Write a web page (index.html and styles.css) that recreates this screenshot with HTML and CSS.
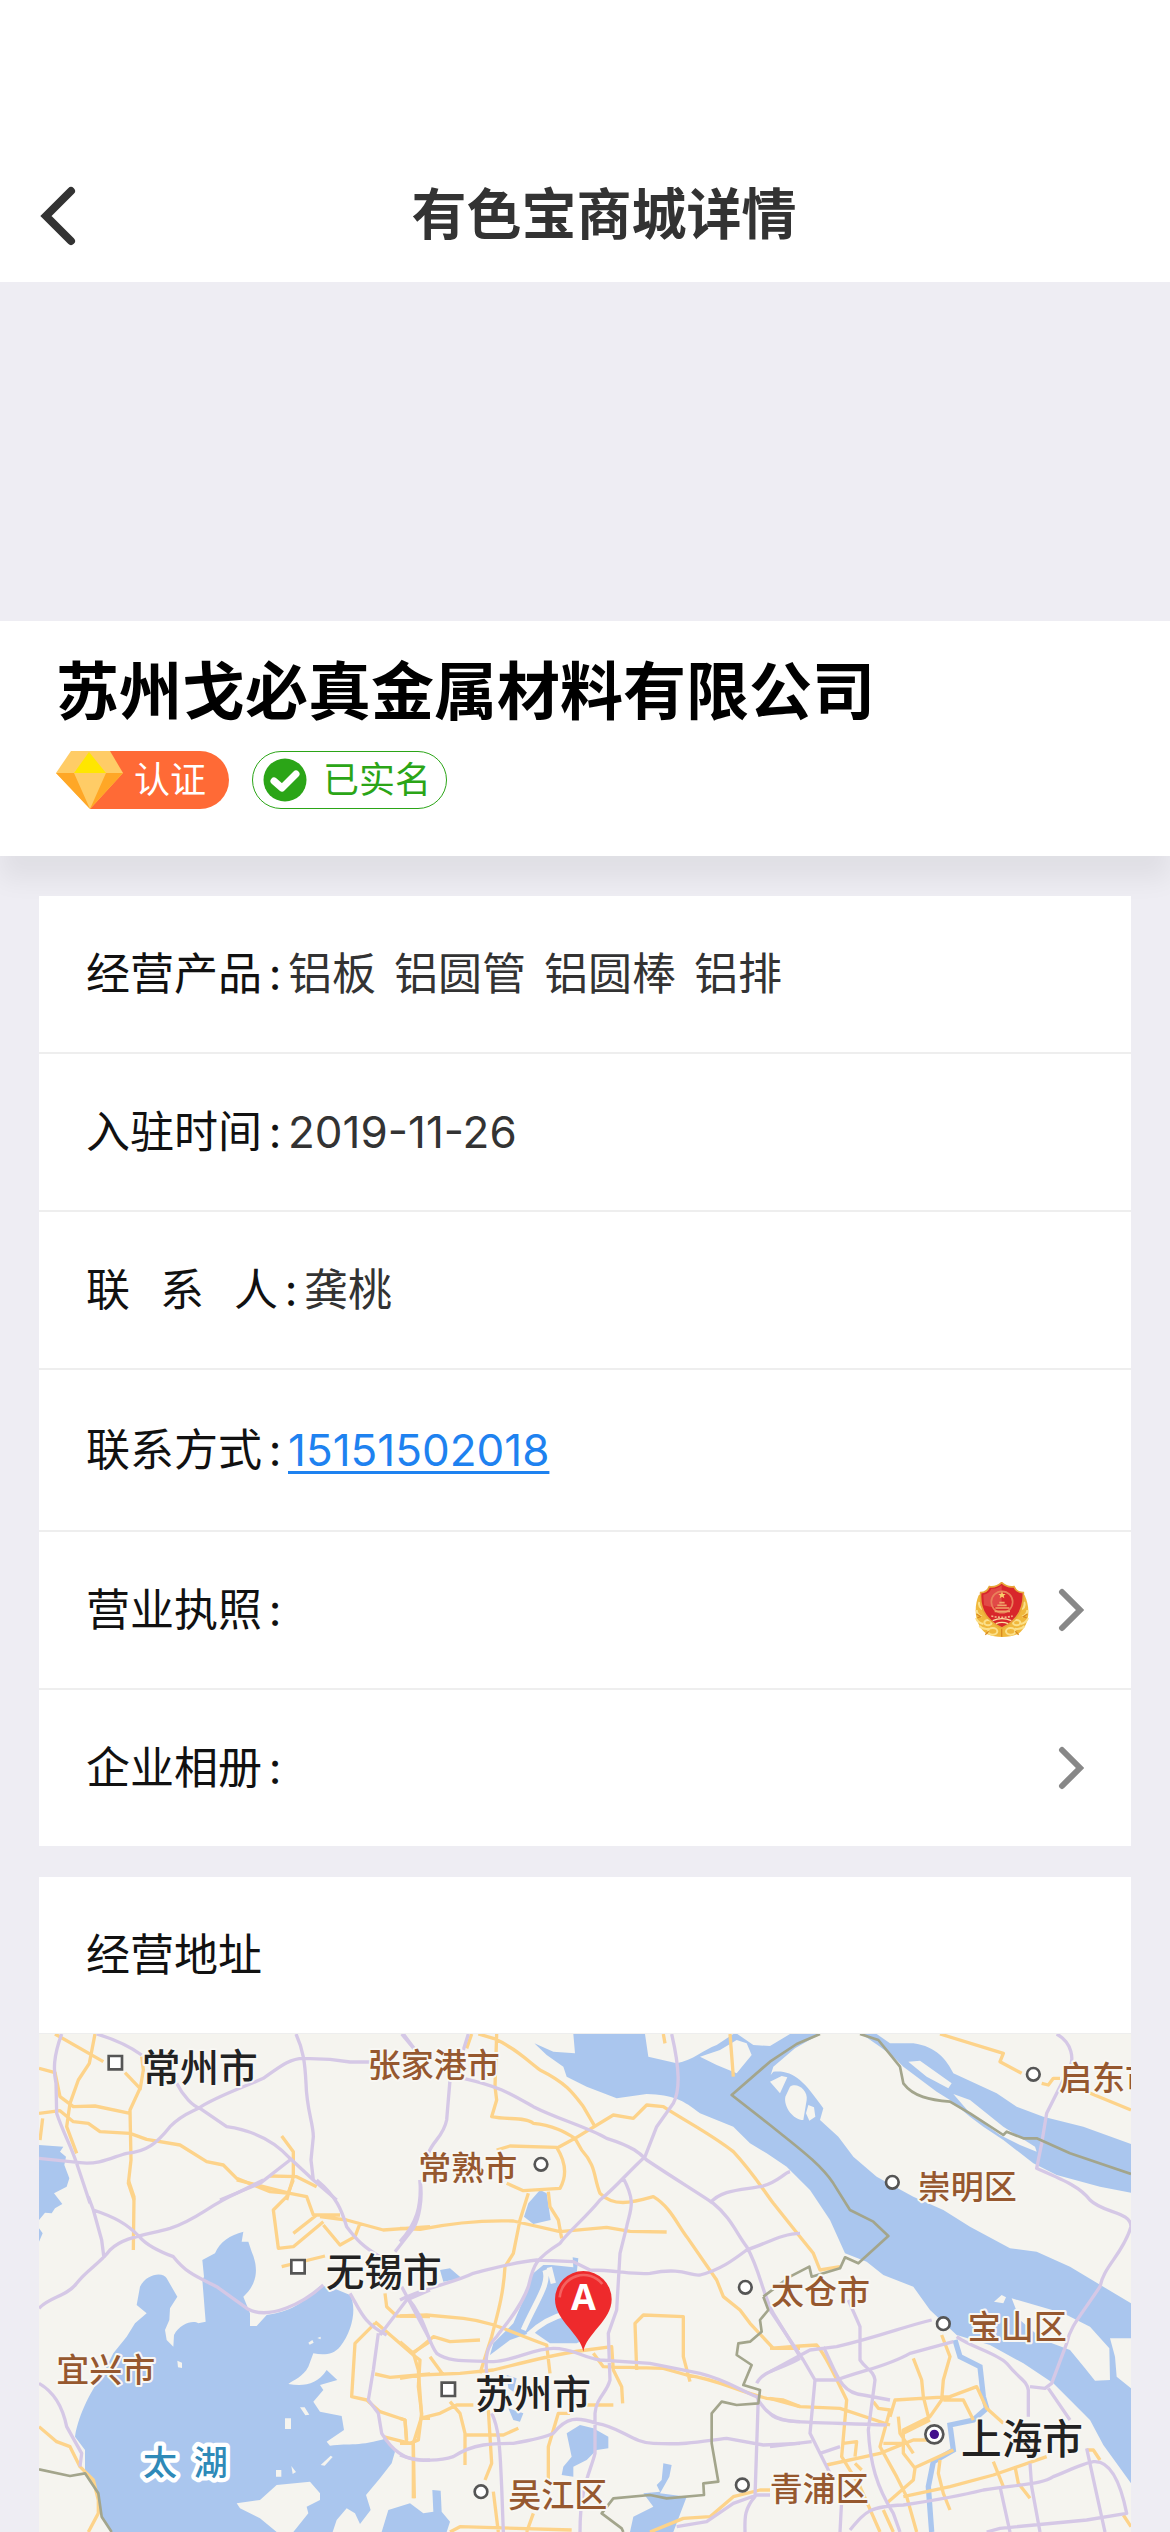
FILE: index.html
```html
<!DOCTYPE html>
<html lang="zh-CN">
<head>
<meta charset="utf-8">
<meta name="viewport" content="width=device-width, initial-scale=1">
<title>有色宝商城详情</title>
<link rel="stylesheet" href="styles.css">
</head>
<body>
<header class="navbar">
  <button class="back" type="button" aria-label="返回">
    <svg width="36" height="60" viewBox="0 0 36 60"><path d="M31 5 6 30 31 55" fill="none" stroke="#333" stroke-width="8" stroke-linecap="round"/></svg>
  </button>
  <h1 class="navbar-title">有色宝商城详情</h1>
</header>

<main>
  <div class="banner"></div>

  <section class="company">
    <h2 class="company-name">苏州戈必真金属材料有限公司</h2>
    <div class="badges">
      <span class="badge badge-cert">
        <svg width="68" height="58" viewBox="0 0 68 58">
          <path d="M15 0H54L67 22 34 58 0 22Z" fill="#fc6"/>
          <path d="M0 22H18L34 58Z M67 22H50L34 58Z" fill="#ffa726"/>
          <path d="M33 1 50 22H18Z" fill="#ffe600"/>
        </svg>
        认证
      </span>
      <span class="badge badge-real">
        <svg width="44" height="44" viewBox="0 0 44 44">
          <circle cx="22" cy="22" r="21.500" fill="#2ba517"/>
          <path d="M11 23 19 30 33 16" fill="none" stroke="#fff" stroke-width="7" stroke-linecap="round" stroke-linejoin="round"/>
        </svg>
        已实名
      </span>
    </div>
  </section>

  <section class="card">
    <dl class="info">
      <div class="row">
        <dt>经营产品<span class="colon">:</span></dt>
        <dd class="products"><span>铝板</span><span>铝圆管</span><span>铝圆棒</span><span>铝排</span></dd>
      </div>
      <div class="row">
        <dt>入驻时间<span class="colon">:</span></dt>
        <dd>2019-11-26</dd>
      </div>
      <div class="row">
        <dt><span class="spread"><span>联</span><span>系</span><span>人</span></span><span class="colon">:</span></dt>
        <dd>龚桃</dd>
      </div>
      <div class="row row-phone">
        <dt>联系方式<span class="colon">:</span></dt>
        <dd><a class="phone" href="tel:15151502018">15151502018</a></dd>
      </div>
      <div class="row">
        <dt>营业执照<span class="colon">:</span></dt>
        <dd class="more">
          <svg width="56" height="56" viewBox="0 0 168 168">
            <path d="M14 40C-2 78 2 130 38 156 66 168 104 168 132 156 168 130 170 78 152 40L126 30H40Z" fill="#f0b83c"/>
            <g fill="none" stroke="#fbe08a" stroke-width="6">
              <path d="M16 60q-4 12 8 22M8 84q0 14 16 20M6 108q4 14 22 18M16 132q12 12 30 8M150 60q6 12-6 22M160 84q0 14-16 20M162 108q-4 14-22 18M152 132q-12 12-30 8"/>
              <ellipse cx="56" cy="148" rx="14" ry="10"/><ellipse cx="110" cy="148" rx="14" ry="10"/>
              <ellipse cx="42" cy="122" rx="11" ry="8"/><ellipse cx="128" cy="122" rx="11" ry="8"/>
            </g>
            <path d="M8 96l12 8-10 4M160 96l-12 8 10 4M34 158l10-10M134 158l-10-10M83 140v24" stroke="#d98a1e" stroke-width="4" fill="none"/>
            <path d="M83 2C96 14 108 16 120 14 124 24 134 32 148 32 150 80 132 116 84 138 36 116 16 80 20 32 34 32 42 24 46 14 58 16 70 14 83 2Z" fill="#d8262b" stroke="#e8a63a" stroke-width="5"/>
            <path d="M28 38C40 36 48 30 52 20 64 22 74 18 83 10V70C60 78 42 74 30 70Z" fill="#e8605a" opacity=".6"/>
            <circle cx="84" cy="60" r="32" fill="none" stroke="#e9805a" stroke-width="5"/>
            <path d="M84 28l3 8h8l-6 5 2 8-7-5-7 5 2-8-6-5h8Z" fill="#f8cf6a"/>
            <path d="M64 78h42M70 70h28M76 62h16M62 88h46" stroke="#f0a56a" stroke-width="5"/>
            <path d="M52 102q32 8 64 0" stroke="#f4b98a" stroke-width="5" stroke-dasharray="6 4" fill="none"/>
            <path d="M56 116q28-12 56 0M66 125q18-8 36 0" stroke="#fbe0a0" stroke-width="4" fill="none"/>
          </svg>
          <svg class="chevron" width="26" height="44" viewBox="0 0 26 44"><path d="M4 4 22 22 4 40" fill="none" stroke="#888" stroke-width="6" stroke-linecap="round"/></svg>
        </dd>
      </div>
      <div class="row">
        <dt>企业相册<span class="colon">:</span></dt>
        <dd class="more">
          <svg class="chevron" width="26" height="44" viewBox="0 0 26 44"><path d="M4 4 22 22 4 40" fill="none" stroke="#888" stroke-width="6" stroke-linecap="round"/></svg>
        </dd>
      </div>
    </dl>
  </section>

  <section class="card">
    <h3 class="card-title">经营地址</h3>
    <svg class="map" viewBox="0 0 3276 1494" role="img" aria-label="地图">
      <!-- Each group holds one sheet of the map: centre, east, north-west, south-west -->
      <g class="water">
        <g transform="translate(-27 438)">
          <path d="M27-105 100-100 90-85 108-70 103-45 118-5 110 20 72 40 97 72 75 85 65 100 45 98 27 120ZM27 145 38 160 27 185Z"/>
          <path d="M245 1056 215 1010 200 940 165 870V810L135 770C145 700 190 620 215 590L250 520 290 470 315 430 350 400 320 375 330 320C350 280 400 275 410 295L442 350 420 385 418 420 405 450 410 480 430 500 432 465C450 430 490 420 505 430L527 425 517 300 522 290 517 240 555 220C570 185 600 165 640 155L635 185 655 185 665 215C685 260 685 310 640 350L660 400V438H680L710 405C780 395 820 370 870 318L900 320 960 345C980 380 970 450 930 500 910 525 880 525 850 520L835 560C820 590 790 600 775 612 820 620 860 615 890 570L922 600 870 615 880 630 850 665 870 695 935 708 942 750 890 785 900 797C960 790 990 800 1070 775L1095 815 1085 850 1050 895 1008 945 1022 990 990 1032 975 1000 950 985 920 1020 908 1056Z"/>
          <path class="land" d="M620 970 690 960 740 915 840 905 870 940V960L830 980 835 1000 790 1056H740L690 1015 630 985ZM765 715h18v32h-18ZM810 682l14 0 14 22-12 2ZM872 855l30-28 6 4-24 26ZM738 870h16v20h-16ZM784 858l14 18-10 6ZM442 542l14 6v16l-12-2ZM835 488l12-8 4 8-12 6ZM862 474l10-4v8Z"/>
        </g>
        <g transform="translate(1083 -42)">
          <path d="M-55 1536-35 1470 30 1450 70 1480 100 1475 97 1410 122 1412 125 1475 150 1505 140 1536Z"/>
          <path d="M420 510 440 520 452 600 400 612 372 590 385 550ZM120 750 150 745 185 775 130 785Z"/>
          <path d="M430 735 455 735 520 742 518 712 535 715 530 760 560 850 570 950 530 970 450 970 400 935 330 960 270 1005 280 970 340 910 370 840 400 760Z"/>
          <path d="M540 1215 580 1225 625 1250V1285L590 1290 560 1320 520 1340V1370L485 1365 490 1340 515 1310 500 1240ZM790 1330 815 1335 808 1370 780 1420 860 1430 820 1536H690L700 1490 760 1460 730 1420 780 1415 770 1395 785 1380ZM320 1065l30 10-10 40-15-10ZM325 1165l45 15-10 25-20-5Z"/>
          <path d="M435 750C450 790 410 840 370 930M385 945C420 910 460 890 500 880M448 742 460 790" fill="none" stroke="#f5f4ef" stroke-width="16"/>
          <path d="M403 70 460 95 525 100 520 42H735L745 110 830 130C880 120 910 90 950 75L1000 42 1012 42 1060 75 1110 78 1170 42H1260L1185 85 1120 140 1112 165 1120 155C1180 150 1210 180 1270 265L1260 300 1315 350 1360 410 1430 470 1540 530 1630 570 1710 620 1830 685 1910 695 2010 740 2110 800 2193 850V1390L2110 1275 2070 1200 1960 1090 1870 1030 1770 975 1670 945 1590 870 1540 800 1450 765 1400 725 1335 700 1290 600 1230 510 1160 440 1100 400 1050 370 1000 320 950 300 900 280C850 240 820 225 740 222L650 235 560 200 500 170 490 140 440 105Z"/>
          <path class="land" d="M900 110 960 90 1010 60 1040 70 1055 105 1010 160 950 135Z"/>
        </g>
        <g transform="translate(2193 -42)">
          <path d="M275 42H320L360 70H430C500 80 530 120 550 160L680 220 740 260 820 290 940 320 1083 372V518L990 500 860 465 790 430 700 360 640 320 600 290 540 240 500 215 400 140 370 110 330 80Z"/>
          <path class="land" d="M415 125 450 122 545 190 535 205 470 170ZM550 222 600 240 700 320 795 380 800 395 750 375 690 345 600 280ZM0 185 35 168 52 172 30 220ZM672 845 695 825 708 832 700 850ZM725 835 880 880 960 920 1018 985 1020 1080 975 1082 945 1045 900 990 820 960 750 900ZM1083 955H1020L1035 1010 1040 1070 1083 1105Z"/>
          <path class="land" d="M60 200C80 185 115 210 110 240L100 300C70 300 40 260 46 230ZM115 255 132 262 136 290 118 302 108 280Z"/>
          <path d="M555 960 570 1010 630 1040 640 1130 650 1165 610 1200 540 1215 550 1290 490 1325 475 1400 485 1536" fill="none" stroke="#aac6ee" stroke-width="16"/>
        </g>
      </g>

      <g class="minor">
        <path transform="translate(-27 -552)" d="M75 552 220 635M195 552 178 640 145 690 120 760 110 830 140 910M27 655 75 668 90 740 130 770 195 768 300 790M27 790 90 782 130 815 175 820 210 845 300 850 350 868 450 885 530 935 580 945 620 985 720 1025 780 1030M285 668 330 715 300 780 303 930 295 1000 312 1050M335 620 340 660 330 720M38 805 30 870M755 858 790 905V980L770 1050M720 978 800 980 860 1010"/>
        <path transform="translate(-27 438)" d="M295 0 312 50 310 210M620 0 780 40 830 50 850 105H930M790 0 770 50 730 90 745 205 790 200 880 125M790 160 860 105M880 135 930 195 975 170 990 130M870 110 950 120 1060 150 1200 140M755 260 885 228M1065 340 1070 380 1100 408 1200 410M1035 425 1150 525 1170 540 1165 620 1175 700 1165 780 1140 790 1060 770M1035 430 975 490 965 650 1010 660 1050 695 1125 720 1130 780M1035 582 1080 592 1200 582M1150 790 1153 955M1145 520 1200 485M1175 715H1200M27 740 80 785 120 800 150 860 190 900 205 960V1000L175 1056"/>
        <path transform="translate(1083 -42)" d="M215 42 200 85M235 42 280 55C340 80 380 120 420 150 500 190 520 220 550 260L585 320M290 42 285 200 290 240 275 290C320 300 380 290 400 310 460 315 500 340 525 355L545 390C590 440 580 470 600 520 640 560 690 550 760 530 810 560 830 610 860 650L950 780 970 830 1020 870 1050 910 1120 985H1200M470 385 525 355 640 285 700 295 740 255 790 260C850 300 930 340 1000 395 1060 460 1090 510 1120 550L1200 650 1240 700 1260 750 1320 740M290 390 330 378 470 382C500 430 500 470 480 505L370 512 320 490M385 520 360 600 340 700 315 740C310 830 290 890 275 950L240 1060M445 515 450 560 475 600 485 655M0 625 60 628C150 610 250 600 340 603L480 635 620 622 690 634 800 636M0 888 80 885 190 895C280 905 340 940 440 975L450 1060M0 965 40 1000 100 950 150 965 240 960M40 1000 55 1050 65 1190 40 1270V1435M90 1010 130 1065M0 1075 60 1065 180 1060 280 1050C400 1020 480 1000 560 990L635 980 640 1050 665 1100 668 1150M580 1000 610 1040 790 1045 860 1065C960 1080 1000 1110 1100 1135L1150 1140 1200 1160M710 1050 705 910 730 885 850 890V1010L870 1085M60 1195 120 1180 170 1155 220 1155M150 1145 180 1180 195 1240V1335M195 1245H310L355 1225M265 1170 275 1330 255 1380M510 1180H475L445 1280V1380M0 1270H40M560 1155H640M0 1195 15 1200 20 1270M280 1415 295 1536M150 1536 180 1520 515 1530M790 42 795 70M990 42 1000 170M750 1536 850 1495 930 1490 1000 1430 1080 1410H1110M380 1536 400 1480"/>
        <path transform="translate(2193 -42)" d="M510 42 700 100 690 125 755 160M815 190 835 195 850 175H870M950 215 1083 270M0 985 90 978 140 975C170 1010 190 1060 230 1140L215 1310 270 1400 330 1536M430 1015 455 1080 460 1130 475 1190M515 945 540 1010 520 1080 515 1140 480 1190 400 1230V1300L435 1345 430 1380 350 1450M0 1135 90 1160 210 1165 360 1215M310 1145 325 1165 360 1170 330 1280 380 1370 410 1430 440 1536M360 1190 375 1140 540 1130 620 1100 650 1165 700 1210M520 1140H580L610 1200M170 1335 330 1300 430 1260 480 1260M400 1430 540 1400 670 1365 830 1310M340 1270H400M430 1345 550 1290M510 1320 505 1360 520 1420 540 1470M670 1325 700 1400M735 1340 745 1390 780 1435M950 1290H970L990 1320M385 1190 390 1240 430 1300M340 1470 370 1536M1060 1485 1083 1520M220 1270 260 1265 255 1310M400 1240 480 1200M255 1330 275 1350"/>
      </g>

      <g class="major">
        <path transform="translate(-27 -552)" d="M95 552C70 620 70 660 78 700L80 790C100 850 120 880 140 940L180 1060M200 552C260 570 300 590 335 615M440 700C460 740 490 770 510 775L590 830C660 840 730 870 780 925L850 990 920 1050M27 925 150 938C210 945 250 920 290 910 350 905 380 880 420 830 460 790 490 785 510 772 560 740 620 720 700 685 750 650 780 625 820 625L900 628 960 636H1020M798 552C820 600 825 640 828 700 830 780 850 820 850 860L843 930 850 990M780 930 690 1000 570 1050M1120 552 1160 605"/>
        <path transform="translate(-27 438)" d="M175 50 190 90 215 180 222 235M190 90C250 110 290 130 330 172 350 195 390 215 430 230 470 280 500 290 560 320L655 388C720 420 820 370 880 315M27 385C60 350 110 350 140 310 170 270 210 250 240 210 280 170 350 165 420 145 500 120 530 80 620 40L700 0M860 0C920 50 935 90 950 140 980 180 1000 200 1050 230M1170 0C1180 60 1165 120 1150 145L1095 215M960 340C990 390 1000 430 1070 465M1050 465 1130 360 1200 330M1115 320 1200 480M1045 460 1030 570 1015 660 1045 700 1055 760C1080 800 1120 850 1200 840M27 610C80 640 100 690 110 740L155 820 150 860"/>
        <path transform="translate(1083 -42)" d="M5 42 45 90M205 42 190 90M150 180 140 300C130 350 100 360 85 400M60 480C65 560 50 610 0 665M190 175C300 200 330 220 400 260 480 300 560 320 620 355 700 380 720 400 740 420 830 480 880 510 940 550 990 590 1010 640 1040 680 1080 750 1090 830 1120 880L1200 1010M815 42C840 150 840 210 820 250L770 320 735 410C680 460 650 500 600 540 560 590 500 640 480 670 400 720 400 740 385 800 360 870 310 920 290 950 260 980 255 1010 260 1060M670 475C710 550 690 570 680 620L660 700 650 870 625 940 630 1080C620 1120 590 1130 585 1180V1300C570 1360 540 1400 540 1536M930 550C960 510 1020 510 1080 500 1130 490 1150 460 1170 455M0 840C80 800 160 790 220 760 300 740 350 725 410 720L520 725 570 750C650 750 700 765 750 760 850 740 870 770 900 765 960 750 1000 720 1040 690 1100 670 1150 640 1200 640M20 830C80 900 80 960 110 1000 150 1030 220 1020 280 1025 350 1020 400 985 460 985 520 985 540 1010 600 1020L750 1030 900 1060C980 1080 1020 1110 1070 1130 1090 1170 1120 1205 1200 1205M0 1305C60 1330 130 1320 160 1310 220 1270 280 1270 340 1270 400 1260 440 1250 460 1240 500 1190 530 1190 590 1210 660 1220 700 1270 760 1270 860 1275 900 1265 980 1255L1090 1275 1200 1270M275 1180C300 1230 300 1300 305 1400L310 1536M1075 1130 1065 1430C1030 1470 1035 1500 1035 1536M1070 1090C1090 1050 1140 1050 1200 1015M830 1520 920 1505 1000 1450 1070 1425H1110"/>
        <path transform="translate(2193 -42)" d="M860 42C910 70 910 120 900 140L830 280 815 370 800 445C880 480 930 500 960 540 1000 580 1083 575 1083 620 1060 700 1000 740 990 800 930 890 900 920 890 970L845 1090 825 1105 780 1100M560 950C600 980 680 1000 710 1030 750 1080 770 1080 775 1110V1190M835 1105 900 1200M0 870 100 1020 135 1080 120 1240 190 1380M235 840 270 920V1020C290 1050 310 1050 315 1080L295 1230C300 1330 320 1400 370 1480L390 1536M485 900C400 920 330 950 200 980L120 990 0 1055M550 965 420 1000C350 1040 280 1050 200 1080H135M160 980C200 1060 210 1120 280 1125L360 1140M0 1180C20 1210 80 1205 350 1215M0 1280 125 1265M150 1300 210 1280M240 1530C290 1470 300 1460 400 1455 500 1440 560 1430 640 1410 780 1390 820 1390 850 1370 900 1350 940 1330 970 1325 1020 1320 1050 1380 1070 1480L950 1500 690 1525 650 1536M780 1330 785 1400 810 1536M950 1285 975 1400 1005 1536M690 1400 720 1536M215 1440 210 1536"/>
      </g>

      <g class="border-line">
        <path transform="translate(-27 438)" d="M27 868 120 888 165 880 205 940 215 1010 245 1056"/>
        <path transform="translate(2193 -42)" d="M150 42 80 72 0 125-115 225 0 315C80 380 150 430 190 490L240 570 310 605 355 648 265 730 225 712 210 745 125 770 118 740 60 770-20 830M270 42 325 60 390 140 400 190C430 230 480 240 540 245L600 280 700 345 710 335 760 355H800L900 400 1083 462"/>
        <path transform="translate(1083 -42)" d="M1090 830 1105 870 1080 900 1085 935 1050 965 1015 970 1010 1005 1055 1035 1030 1095 1080 1110 1075 1150 1010 1155 965 1145 935 1180V1270L955 1385 910 1390 912 1425 800 1435 750 1425 640 1435 605 1480 665 1525 670 1536"/>
      </g>

      <g class="marks">
        <path d="M209 66h40v40h-40ZM757 678h40v40h-40ZM1208 1046h40v40h-40Z"/>
        <circle cx="1506" cy="391" r="19"/><circle cx="2119" cy="760" r="19"/>
        <circle cx="1326" cy="1373" r="19"/><circle cx="2110" cy="1353" r="19"/>
        <circle cx="2983" cy="121" r="19"/><circle cx="2560" cy="445" r="19"/>
        <circle cx="2713" cy="869" r="19"/><circle cx="2686" cy="1201" r="27"/>
      </g>
      <circle cx="2686" cy="1201" r="14" fill="#43108c"/>

      <g class="city">
        <text x="308" y="143">常州市</text>
        <text x="860" y="756">无锡市</text>
        <text x="1308" y="1121">苏州市</text>
        <text class="metro" x="2766" y="1261">上海市</text>
      </g>
      <g class="town">
        <text x="986" y="128">张家港市</text>
        <text x="1138" y="438">常熟市</text>
        <text x="52" y="1043">宜兴市</text>
        <text x="1408" y="1420">吴江区</text>
        <text x="2196" y="811">太仓市</text>
        <text x="2192" y="1402">青浦区</text>
        <text x="2786" y="915">宝山区</text>
        <text x="2636" y="496">崇明区</text>
        <text x="3060" y="168">启东市</text>
      </g>
      <text class="lake" x="312" y="1323">太</text>
      <text class="lake" x="464" y="1323">湖</text>

      <path d="M1633 953C1625 900 1548 860 1548 796A85 85 0 0 1 1718 796C1718 860 1641 900 1633 953Z" fill="#ee2a2c"/>
      <path d="M1562 790A72 72 0 0 1 1690 750" fill="none" stroke="#f4625f" stroke-width="8"/>
      <text class="pin" x="1633" y="828">A</text>
    </svg>
  </section>
</main>
</body>
</html>
```
FILE: styles.css
```css
* {
  box-sizing: border-box;
  margin: 0;
  padding: 0;
}

body {
  background: #eeedf3;
  color: #111;
  font-family: Inter, "Noto Sans CJK SC", sans-serif;
  font-size: 44px;
  line-height: 60px;
}

.navbar {
  display: grid;
  grid-template-columns: 38px 1fr;
  align-items: center;
  padding: 150px 0 0;
  height: 282px;
  background: #fff;
}

.back {
  width: 80px;
  height: 64px;
  padding: 0 0 0 40px;
  border: 0;
  background: none;
}

.back svg {
  display: block;
}

.navbar-title {
  padding-bottom: 4px;
  color: #333;
  font-size: 55px;
  font-weight: 700;
  text-align: center;
}

.banner {
  height: 339px;
}

.company {
  padding: 38px 56px 47px;
  background: #fff;
  box-shadow: 0 24px 24px rgba(0, 0, 0, 0.06);
}

.company-name {
  color: #000;
  font-size: 63px;
  font-weight: 700;
  line-height: 64px;
}

.badges {
  display: flex;
  gap: 23px;
  margin-top: 28px;
}

.badge {
  display: flex;
  align-items: center;
  height: 58px;
  border-radius: 29px;
  font-size: 36px;
  font-weight: 400;
}

.badge-cert {
  gap: 10px;
  padding-right: 23px;
  background: linear-gradient(90deg, transparent 34px, #ff6a36 34px);
  color: #fff;
}

.badge-real {
  gap: 16px;
  padding: 0 15px 0 10px;
  border: 1px solid #2ba517;
  color: #2ba517;
}

.card {
  margin: 40px 39px 31px;
  background: #fff;
}

.card + .card {
  margin: 0 39px;
}

.row {
  display: flex;
  align-items: center;
  min-height: 158px;
  padding: 0 47px;
  border-bottom: 2px solid #eee;
}

.row-phone {
  min-height: 162px;
}

.row:last-child {
  min-height: 156px;
  border-bottom: 0;
}

.row dt {
  display: flex;
}

.row dd {
  color: #333;
}

.colon {
  width: 26px;
  text-align: center;
}

.spread {
  display: flex;
  gap: 30px;
}

.products {
  display: flex;
  gap: 18px;
}

.phone {
  color: #1e82f0;
  text-decoration: underline;
  text-decoration-thickness: 3px;
  text-underline-offset: 5px;
}

.row .more {
  display: flex;
  align-items: center;
  gap: 28px;
  margin-left: auto;
}

.card-title {
  padding: 48px 47px;
  border-bottom: 1px solid #eee;
  font-size: 44px;
  font-weight: 400;
}

.map {
  display: block;
  width: 100%;
  background: #f5f4ef;
  font-family: "Noto Sans CJK SC", sans-serif;
}

.water {
  fill: #aac6ee;
}

.land {
  fill: #f5f4ef;
}

.minor,
.major,
.border-line {
  fill: none;
  stroke-linejoin: round;
}

.minor {
  stroke: #fdd38a;
  stroke-width: 10px;
}

.major {
  stroke: #d5c8e6;
  stroke-width: 10px;
}

.border-line {
  stroke: #a3a58c;
  stroke-width: 8px;
}

.marks {
  fill: #fff;
  stroke: #555;
  stroke-width: 8px;
}

.city,
.town,
.lake {
  paint-order: stroke;
  stroke: #f8f7f3;
  stroke-width: 12px;
  stroke-linejoin: round;
  font-weight: 500;
}

.city {
  fill: #222;
  font-size: 116px;
}

.metro {
  font-size: 122px;
}

.town {
  fill: #96582f;
  font-size: 99px;
}

.lake {
  fill: #2f8ab8;
  stroke: #fff;
  stroke-width: 26px;
  font-size: 102px;
}

.pin {
  fill: #fff;
  font-family: "Open Sans", sans-serif;
  font-size: 108px;
  font-weight: 700;
  text-anchor: middle;
}
```
